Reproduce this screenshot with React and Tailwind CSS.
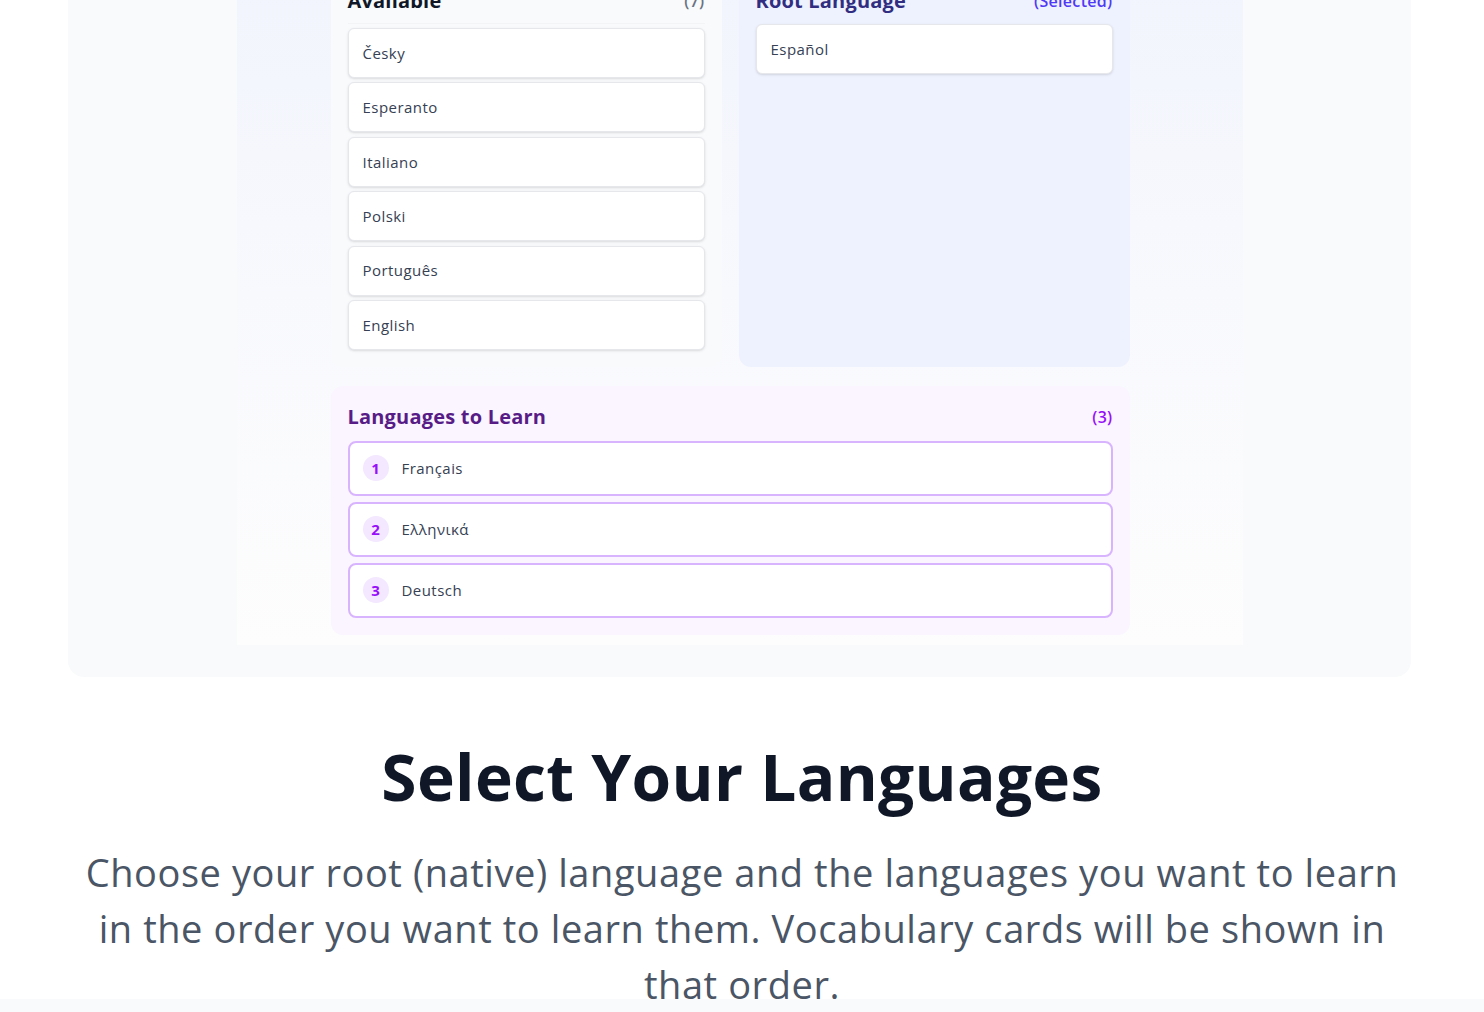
import React from 'react';

const available = ['Česky', 'Esperanto', 'Italiano', 'Polski', 'Português', 'English'];
const learning = ['Français', 'Ελληνικά', 'Deutsch'];

const PanelHeader = ({ title, count, titleClass, countClass }) => (
    <div className="flex h-[28px] items-center justify-between">
        <h3 className={`text-[20px] font-bold tracking-[0.01em] ${titleClass}`}>{title}</h3>
        <span className={`text-[16px] font-semibold tracking-[0.02em] ${countClass}`}>{count}</span>
    </div>
);

const LanguageItem = ({ name }) => (
    <div className="flex h-[50px] items-center rounded-md border border-gray-200 bg-white px-[14px] text-[15px] tracking-[0.03em] text-gray-700 shadow-sm">
        {name}
    </div>
);

const LearnItem = ({ index, name }) => (
    <div className="flex h-[55px] items-center gap-[13px] rounded-lg border-2 border-[#d8b4fe] bg-white px-[13px]">
        <span className="grid size-[26px] place-items-center rounded-full bg-[#f3e8ff] text-[15px] font-bold text-purple-600">
            {index}
        </span>
        <span className="text-[15px] tracking-[0.03em] text-gray-700">{name}</span>
    </div>
);

export default function App() {
    return (
        <div className="min-h-screen overflow-hidden bg-white font-['Open_Sans',sans-serif]">
            <section className="-mt-[80px] px-[68px]">
                <div className="w-[1343px] rounded-2xl bg-gray-50 pt-[20px] pb-[32px]">
                    <div className="mx-auto w-[1006px] bg-linear-to-b from-[#f1f4fd] via-[#f8f9fd] to-[#fdfdfd] pt-[30px] pr-[113px] pb-[10px] pl-[94px]">
                        <div className="grid grid-cols-2 gap-[17px]">
                            {/* available languages */}
                            <div className="rounded-xl bg-[#f8fafc] p-[17px]">
                                <div className="mb-[8px]">
                                    <PanelHeader title="Available" count="(7)" titleClass="text-gray-900" countClass="text-gray-500" />
                                </div>
                                <div className="flex flex-col gap-[4.4px] border-t border-gray-100 pt-[4px]">
                                    {available.map(lang => (
                                        <LanguageItem key={lang} name={lang} />
                                    ))}
                                </div>
                            </div>

                            {/* root language */}
                            <div className="rounded-xl bg-[#eef2fe] p-[17px]">
                                <div className="mb-[9px]">
                                    <PanelHeader title="Root Language" count="(Selected)" titleClass="text-[#312e81]" countClass="text-indigo-600" />
                                </div>
                                <LanguageItem name="Español" />
                            </div>
                        </div>

                        {/* languages to learn */}
                        <div className="mt-[19px] rounded-xl bg-[#faf5ff] p-[17px]">
                            <div className="mb-[10px]">
                                <PanelHeader title="Languages to Learn" count="(3)" titleClass="text-[#581c87]" countClass="text-purple-600" />
                            </div>
                            <div className="flex flex-col gap-[6px]">
                                {learning.map((lang, i) => (
                                    <LearnItem key={lang} index={i + 1} name={lang} />
                                ))}
                            </div>
                        </div>
                    </div>
                </div>
            </section>

            <section className="h-[322px] overflow-hidden pt-[68px] text-center">
                <h2 className="text-[64px] leading-none font-bold tracking-[0.005em] text-gray-900">
                    Select Your Languages
                </h2>
                <p className="mx-auto mt-[35px] max-w-[1330px] text-[38px] leading-[56px] tracking-[0.015em] text-gray-600">
                    Choose your root (native) language and the languages you want to learn in the order you want to learn them. Vocabulary cards will be shown in that order.
                </p>
            </section>
            <div className="h-[14px] bg-gray-50" />
        </div>
    );
}
